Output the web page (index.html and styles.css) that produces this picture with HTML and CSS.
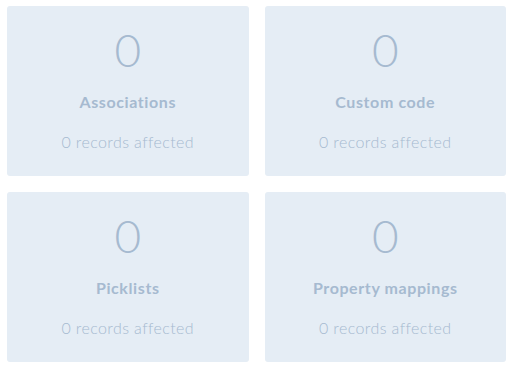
FILE: index.html
```html
<!DOCTYPE html>
<html lang="en">
<head>
  <meta charset="UTF-8">
  <meta name="viewport" content="width=device-width, initial-scale=1.0">
  <title>Sync summary</title>
  <link rel="stylesheet" href="styles.css">
</head>
<body>

  <div class="summary-grid">
    <!-- Associations -->
    <div class="stat-card">
      <div class="stat-count">0</div>
      <div class="stat-title">Associations</div>
      <div class="stat-records">0 records affected</div>
    </div>

    <!-- Custom code -->
    <div class="stat-card">
      <div class="stat-count">0</div>
      <div class="stat-title">Custom code</div>
      <div class="stat-records">0 records affected</div>
    </div>

    <!-- Picklists -->
    <div class="stat-card">
      <div class="stat-count">0</div>
      <div class="stat-title">Picklists</div>
      <div class="stat-records">0 records affected</div>
    </div>

    <!-- Property mappings -->
    <div class="stat-card">
      <div class="stat-count">0</div>
      <div class="stat-title">Property mappings</div>
      <div class="stat-records">0 records affected</div>
    </div>
  </div>

</body>
</html>
```

FILE: styles.css
```css
* {
  margin: 0;
  padding: 0;
  box-sizing: border-box;
  font-family: 'Lato', 'Liberation Sans', sans-serif;
}

body {
  background-color: #fff;
}

.summary-grid {
  display: grid;
  grid-template-columns: 1fr 1fr;
  gap: 16px;
  width: 506px;
  padding: 6px 0 0 7px;
}

.stat-card {
  display: flex;
  flex-direction: column;
  align-items: center;
  height: 170px;
  padding-top: 20px;
  background-color: #e5edf5;
  border-radius: 3px;
  color: #a6bad0;
  text-align: center;
}

.stat-count {
  font-size: 46px;
  font-weight: 300;
  line-height: 48px;
}

.stat-title {
  margin-top: 18px;
  font-size: 16px;
  font-weight: 700;
  line-height: 20px;
  letter-spacing: 0.6px;
}

.stat-records {
  margin-top: 20px;
  font-size: 16px;
  font-weight: 300;
  line-height: 20px;
  letter-spacing: 0.4px;
}
```
